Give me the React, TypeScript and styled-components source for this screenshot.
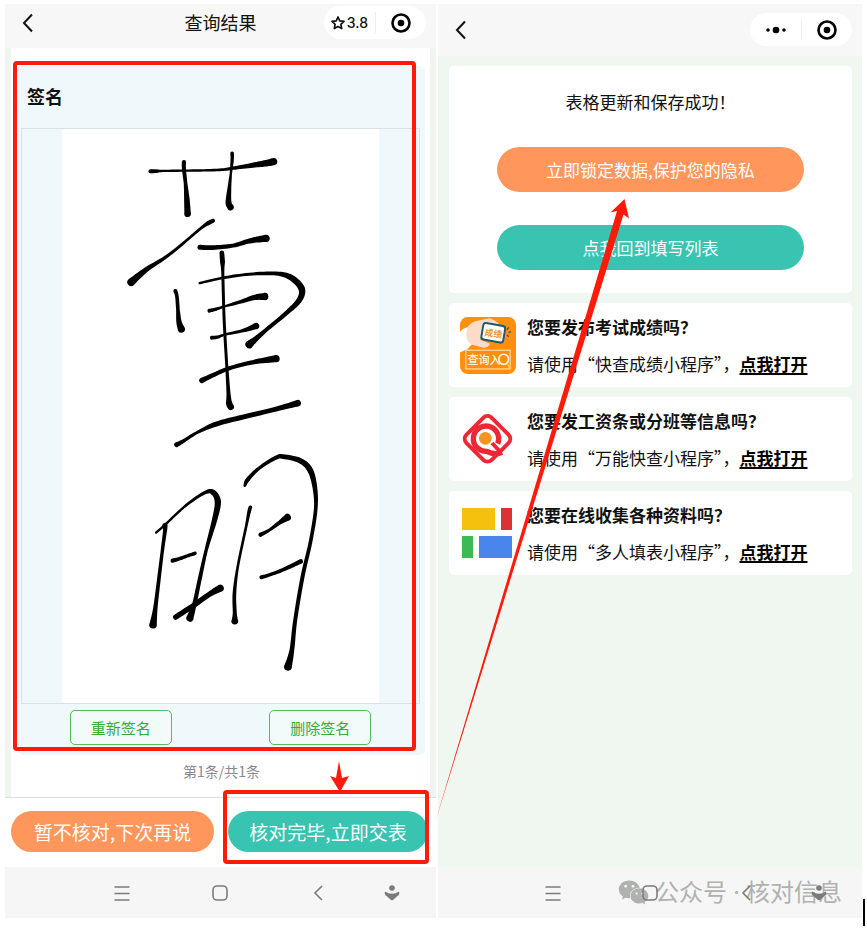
import React from "react";
import styled, { createGlobalStyle } from "styled-components";
import { FaWeixin } from "react-icons/fa";

const GlobalStyle = createGlobalStyle`
  *, *::before, *::after { box-sizing: border-box; }
  body {
    margin: 0;
    background: #fff;
    color: #111;
    font-family: "Noto Sans CJK SC", "Noto Sans", sans-serif;
  }
  button { font-family: inherit; cursor: pointer; }
  h1, h2, p { margin: 0; font-weight: 400; }
  svg { display: block; flex: none; }
`;

const RED = "#ff1a0a";
const ORANGE = "#ff965b";
const TEAL = "#39c4b2";

const Page = styled.main`
  position: relative;
  display: grid;
  grid-template-columns: 431fr 424fr;
  gap: 2px;
  min-height: 100vh;
  padding: 4px 5px 12px;
  overflow: hidden;
`;

const Phone = styled.section`
  display: flex;
  flex-direction: column;
  min-width: 0;
`;

const Header = styled.header<{ $tall?: boolean }>`
  display: grid;
  grid-template-columns: 1fr auto 1fr;
  align-items: center;
  padding: ${(p) => (p.$tall ? "9px 10px 10px" : "2px 10px 9px")};
  background: #f7f7f7;
`;

const ScreenTitle = styled.h1`
  font-size: 18px;
  line-height: 33px;
`;

const IconButton = styled.button`
  display: flex;
  align-items: center;
  justify-content: center;
  padding: 0;
  border: 0;
  background: none;
  color: inherit;
`;

const BackButton = styled(IconButton)`
  justify-self: start;
  width: 25px;
  height: 33px;
`;

const Capsule = styled.div`
  display: grid;
  grid-template-columns: auto 51px;
  align-items: center;
  justify-self: end;
  height: 33px;
  border-radius: 17px;
  background: #fff;
`;

const CapsulePart = styled(IconButton)`
  gap: 2px;
  min-width: 51px;
  height: 21px;
  padding: 0 7px;
  font: 500 14px/21px Inter, sans-serif;

  & + & { border-left: 1px solid #eee; }
`;

const ReviewBody = styled.div`
  flex: 1;
  padding: 0 6px;
  background: #f0f5f1;
`;

const Sheet = styled.div`
  height: 100%;
  padding: 18px 5px 12px 7px;
  background: #fff;
`;

const Marked = styled.div<{ $inset: string }>`
  position: relative;

  &::after {
    content: "";
    position: absolute;
    inset: ${(p) => p.$inset};
    border: 4px solid ${RED};
    border-radius: 4px;
    pointer-events: none;
  }
`;

const SignatureCard = styled.div`
  padding: 12px 5px 10px 3px;
  border-radius: 5px;
  background: #eff8fb;
`;

const FieldTitle = styled.h2`
  padding: 0 6px 13px;
  font-size: 18px;
  font-weight: 700;
  line-height: 37px;
`;

const SignatureFrame = styled.div`
  padding: 0 40px;
  border: 1px solid #d9e1e3;

  svg { width: 100%; height: auto; background: #fff; }
`;

const SignatureActions = styled.div`
  display: grid;
  grid-template-columns: 1fr 1fr;
  justify-items: center;
  padding-top: 6px;
`;

const OutlineButton = styled.button`
  width: 102px;
  padding: 5px 0;
  border: 1px solid #52bd59;
  border-radius: 5px;
  background: #f3fafa;
  color: #32ac38;
  font-size: 15px;
  line-height: 23px;
`;

const Pager = styled.p`
  padding-top: 5px;
  color: #8a8a8a;
  font-size: 14px;
  line-height: 22px;
  text-align: center;
`;

const ActionBar = styled.div`
  display: grid;
  grid-template-columns: 203fr 200fr;
  gap: 14px;
  padding: 13px 8px 15px 6px;
  border-top: 1px solid #dcdfdf;
`;

const PillButton = styled.button<{ $color: string; $size?: number }>`
  width: 100%;
  padding: 7px 0;
  border: 0;
  border-radius: 23px;
  background: ${(p) => p.$color};
  color: #fff;
  font-size: ${(p) => p.$size ?? 17}px;
  line-height: 27px;
`;

const SystemBar = styled.nav`
  position: relative;
  display: grid;
  grid-template-columns: 67fr 99fr 98fr 98fr 50fr 19fr;
  align-items: center;
  height: 51px;
  background: #f6f6f6;
  color: #7b7b7b;

  button:first-of-type { grid-column: 2; }
`;

const SystemButton = styled(IconButton)`
  z-index: 1;
  height: 40px;
`;

const Watermark = styled.div`
  position: absolute;
  right: 20px;
  top: 7px;
  display: flex;
  align-items: center;
  gap: 6px;
  color: #b0b2b0;
  font-family: "Noto Sans", "Noto Sans CJK SC", sans-serif;
  font-size: 24px;
  line-height: 36px;
  white-space: nowrap;
`;

const ResultBody = styled.div`
  display: flex;
  flex: 1;
  flex-direction: column;
  gap: 10px;
  padding: 10px 10px 0 11px;
  background: #eff7f0;
`;

const SuccessCard = styled.div`
  display: flex;
  flex-direction: column;
  align-items: center;
  padding: 20px 12% 23px;
  border-radius: 5px;
  background: #fff;

  p { font-size: 17px; line-height: 32px; }
  button { padding: 9px 0; }
  p + button { margin-top: 29px; }
  button + button { margin-top: 33px; }
`;

const PromoCard = styled.article`
  display: flex;
  align-items: center;
  gap: 11px;
  padding: 5px 11px;
  border-radius: 5px;
  background: #fff;
  font-size: 17px;
  line-height: 37px;
  white-space: nowrap;

  h2 { font-size: 17px; font-weight: 700; line-height: 37px; }
  a {
    color: #000;
    font-weight: 700;
    text-decoration-thickness: 2px;
    text-underline-offset: 2px;
    text-decoration-skip-ink: none;
  }
`;

const ArrowLayer = styled.svg`
  position: absolute;
  left: 0;
  top: 0;
  pointer-events: none;
`;

const Caret = styled.span`
  position: absolute;
  right: 2px;
  top: 899px;
  width: 2px;
  height: 27px;
  background: #000;
`;

type InkPoint = [number, number, number];

const PEN_SPREAD = 2;

/** Smooths the pen samples (x, y, pen width) and returns the outline of the stroke. */
function inkOutline(samples: InkPoint[]): string {
  const points = samples.map(([x, y, w]): InkPoint => [x, y, w + PEN_SPREAD]);
  const dense: InkPoint[] = [];
  const at = (i: number) => points[Math.max(0, Math.min(points.length - 1, i))];
  for (let i = 0; i < points.length - 1; i++) {
    const [a, b, c, d] = [at(i - 1), at(i), at(i + 1), at(i + 2)];
    for (let s = 0; s < 8; s++) {
      const t = s / 8;
      const mix = (k: number) =>
        0.5 *
        (2 * b[k] +
          (c[k] - a[k]) * t +
          (2 * a[k] - 5 * b[k] + 4 * c[k] - d[k]) * t * t +
          (3 * b[k] - a[k] - 3 * c[k] + d[k]) * t * t * t);
      dense.push([mix(0), mix(1), b[2] + (c[2] - b[2]) * t]);
    }
  }
  dense.push(points[points.length - 1]);
  const side = (sign: number) =>
    dense.map(([x, y, w], i) => {
      const p = dense[Math.max(0, i - 1)];
      const n = dense[Math.min(dense.length - 1, i + 1)];
      const len = Math.hypot(n[0] - p[0], n[1] - p[1]) || 1;
      const h = (sign * w) / 2 / len;
      return `${(x - (n[1] - p[1]) * h).toFixed(1)} ${(y + (n[0] - p[0]) * h).toFixed(1)}`;
    });
  const left = side(1);
  const right = side(-1).reverse();
  const r0 = points[0][2] / 2;
  const r1 = points[points.length - 1][2] / 2;
  return `M${left.join("L")}A${r1} ${r1} 0 0 0 ${right[0]}L${right.slice(1).join("L")}A${r0} ${r0} 0 0 0 ${left[0]}Z`;
}

const UPPER: InkPoint[][] = [
  [[122, 92, 10], [140, 92, 9], [160, 91, 5], [250, 90, 5], [330, 88, 6], [370, 83, 8], [430, 74, 13], [470, 68, 18], [494, 63, 20]],
  [[223, 65, 11], [223, 85, 10], [228, 130, 9], [232, 180, 15], [234, 220, 18]],
  [[368, 38, 9], [368, 60, 8], [364, 100, 5], [360, 140, 9], [357, 185, 16], [363, 200, 18]],
  [[311, 241, 10], [295, 249, 11], [270, 267, 6], [180, 342, 7], [110, 388, 13], [64, 426, 22]],
  [[271, 321, 13], [310, 322, 12], [370, 316, 10], [420, 302, 13], [470, 294, 20]],
  [[337, 338, 12], [339, 365, 13], [340, 400, 7], [344, 540, 7], [352, 680, 7], [357, 760, 10], [359, 790, 17], [364, 802, 18]],
  [[270, 429, 5], [340, 413, 6], [420, 402, 7], [500, 400, 10], [545, 412, 16], [577, 445, 18], [570, 480, 15], [530, 520, 11], [470, 570, 10], [440, 596, 14], [420, 613, 22]],
  [[197, 452, 10], [202, 470, 9], [205, 510, 9], [208, 545, 14], [215, 567, 20]],
  [[299, 512, 10], [320, 507, 8], [345, 499, 5], [400, 483, 10], [435, 472, 14], [466, 469, 20]],
  [[307, 593, 10], [325, 591, 8], [345, 584, 5], [400, 572, 8], [440, 558, 18]],
  [[276, 722, 14], [310, 706, 11], [360, 685, 10], [430, 667, 11], [500, 656, 20]],
  [[201, 915, 13], [220, 905, 9], [260, 880, 7], [320, 853, 13], [400, 832, 13], [500, 808, 12], [566, 790, 18]],
];

const LOWER: InkPoint[][] = [
  [[79, 278, 5], [105, 255, 5], [170, 195, 6], [225, 158, 8], [250, 156, 14], [265, 185, 17], [255, 240, 14], [230, 330, 8], [210, 420, 10], [195, 490, 11], [181, 535, 20]],
  [[106, 257, 14], [106, 272, 10], [97, 340, 8], [80, 480, 10], [75, 520, 13], [70, 555, 21]],
  [[129, 362, 11], [150, 356, 9], [175, 347, 8], [197, 340, 9]],
  [[138, 532, 14], [190, 498, 14], [240, 463, 14], [272, 445, 20]],
  [[346, 137, 6], [355, 118, 11], [390, 83, 8], [440, 52, 10], [462, 49, 12], [510, 60, 14], [540, 85, 16], [555, 130, 13], [560, 200, 9], [545, 300, 9], [520, 410, 10], [498, 540, 10], [488, 630, 12], [476, 682, 22]],
  [[363, 201, 9], [359, 215, 9], [350, 260, 6], [325, 380, 6], [315, 460, 9], [316, 520, 10], [316, 544, 19]],
  [[393, 284, 11], [420, 270, 7], [450, 248, 10], [474, 232, 20]],
  [[396, 412, 10], [420, 405, 8], [460, 390, 9], [515, 364, 12]],
];

const Signature = () => (
  <svg viewBox="0 0 954 1728" role="img" aria-label="签名">
    <g transform="translate(144 35)">
      {UPPER.map((s, i) => <path key={i} d={inkOutline(s)} />)}
    </g>
    <g transform="translate(204 937)">
      {LOWER.map((s, i) => <path key={i} d={inkOutline(s)} />)}
    </g>
  </svg>
);

const ChevronIcon = () => (
  <svg width="12" height="20" viewBox="0 0 12 20" fill="none" stroke="#111" strokeWidth="2">
    <path d="M10 1.5 2 10l8 8.500" />
  </svg>
);

const TargetIcon = () => (
  <svg width="20" height="20" viewBox="0 0 20 20">
    <circle cx="10" cy="10" r="8.500" fill="none" stroke="#000" strokeWidth="2.600" />
    <circle cx="10" cy="10" r="3.300" />
  </svg>
);

const StarIcon = () => (
  <svg width="14" height="14" viewBox="0 0 14 14" fill="none" stroke="#111" strokeWidth="1.700" strokeLinejoin="round">
    <path d="m7 1 1.800 3.900 4.200.5-3.100 2.900.8 4.300L7 10.500l-3.700 2.100.8-4.300L1 5.400l4.200-.5Z" />
  </svg>
);

const DotsIcon = () => (
  <svg width="22" height="8" viewBox="0 0 22 8">
    <circle cx="3" cy="4" r="1.800" />
    <circle cx="11" cy="4" r="3.300" />
    <circle cx="19" cy="4" r="1.800" />
  </svg>
);

const ScoreIcon = () => (
  <svg width="56" height="57" viewBox="0 0 172 170" preserveAspectRatio="none">
    <rect width="172" height="170" rx="24" fill="#ff8f0c" />
    <path d="M-2 48Q6 34 26 30L60 60 22 96 0 106Z" fill="#fff" />
    <path d="M24 28Q38 12 62 10L92 4Q108 10 122 22L74 32 62 68 92 80Q88 92 72 92L34 82Q18 70 20 50Z" fill="#fcdcc8" />
    <rect x="68" y="22" width="68" height="50" rx="8" transform="rotate(10 102 48)" fill="#fff" stroke="#1d5872" strokeWidth="6" />
    <text x="103" y="59" transform="rotate(8 104 48)" textAnchor="middle" fontSize="27" fontWeight="700" fill="#f3952d">成绩</text>
    <path d="m144 38 6-7M149 46l7-2M144 54l6 5" stroke="#315c64" strokeWidth="4" />
    <rect x="18" y="99" width="136" height="56" fill="none" stroke="#ffe9c7" strokeWidth="3" />
    <text x="23" y="140" fontSize="34" fontWeight="500" fill="#fff6e4">查询入</text>
    <circle cx="134" cy="126" r="15" fill="none" stroke="#fff6e4" strokeWidth="5" />
    <path d="m144 139 13 16" stroke="#ffc445" strokeWidth="6" />
  </svg>
);

const QueryIcon = () => (
  <svg width="56" height="56" viewBox="0 0 168 168" fill="none" stroke="#ee2737">
    <rect x="29" y="30" width="107" height="107" rx="18" transform="rotate(45 82.500 83.500)" strokeWidth="12" />
    <path d="M113 98A38 38 0 1 0 80 121Q106 134 126 124" strokeWidth="16" />
    <path d="m96 96 28 30" strokeWidth="12" />
    <circle cx="76" cy="82" r="19" fill="#f39420" stroke="none" />
  </svg>
);

const FormIcon = () => (
  <svg width="56" height="56" viewBox="0 0 56 56">
    <path fill="#f4c20d" d="M2 3h33v22H2z" />
    <path fill="#db3236" d="M41 3h11v22H41z" />
    <path fill="#3cba54" d="M2 31h11v22H2z" />
    <path fill="#4885ed" d="M19 31h33v22H19z" />
  </svg>
);

const SystemNavigation = ({ children }: { children?: React.ReactNode }) => (
  <SystemBar aria-label="系统导航">
    <SystemButton aria-label="菜单">
      <svg width="16" height="16" viewBox="0 0 16 16" stroke="currentColor" strokeWidth="1.500">
        <path d="M0.500 2h15M0.500 8.500h15M0.500 15h15" />
      </svg>
    </SystemButton>
    <SystemButton aria-label="主页">
      <svg width="16" height="16" viewBox="0 0 16 16" fill="none" stroke="currentColor" strokeWidth="1.600">
        <rect x="1" y="1" width="14" height="14" rx="4" />
      </svg>
    </SystemButton>
    <SystemButton aria-label="后退">
      <svg width="10" height="16" viewBox="0 0 10 16" fill="none" stroke="currentColor" strokeWidth="1.600">
        <path d="M9 1 2 8l7 7" />
      </svg>
    </SystemButton>
    <SystemButton aria-label="辅助功能">
      <svg width="16" height="16" viewBox="0 0 16 16" fill="currentColor">
        <circle cx="8" cy="3" r="2.800" />
        <path d="M1 6.500Q8 11 15 6.500q1 3-1.500 4.500L9 15q-1 .7-2 0l-4.500-4Q0 9.500 1 6.500Z" />
      </svg>
    </SystemButton>
    {children}
  </SystemBar>
);

const PROMOS = [
  { icon: <ScoreIcon />, question: "您要发布考试成绩吗？", program: "快查成绩小程序" },
  { icon: <QueryIcon />, question: "您要发工资条或分班等信息吗？", program: "万能快查小程序" },
  { icon: <FormIcon />, question: "您要在线收集各种资料吗？", program: "多人填表小程序" },
];

export default function App() {
  return (
    <>
      <GlobalStyle />
      <Page lang="zh-CN">
        <Phone>
          <Header>
            <BackButton aria-label="返回"><ChevronIcon /></BackButton>
            <ScreenTitle>查询结果</ScreenTitle>
            <Capsule>
              <CapsulePart><StarIcon />3.8</CapsulePart>
              <CapsulePart aria-label="关闭"><TargetIcon /></CapsulePart>
            </Capsule>
          </Header>
          <ReviewBody>
            <Sheet>
              <Marked $inset="-5px 9px 4px -5px">
                <SignatureCard>
                  <FieldTitle>签名</FieldTitle>
                  <SignatureFrame><Signature /></SignatureFrame>
                  <SignatureActions>
                    <OutlineButton>重新签名</OutlineButton>
                    <OutlineButton>删除签名</OutlineButton>
                  </SignatureActions>
                </SignatureCard>
              </Marked>
              <Pager>第1条/共1条</Pager>
            </Sheet>
          </ReviewBody>
          <ActionBar>
            <PillButton $color={ORANGE} $size={19}>暂不核对,下次再说</PillButton>
            <Marked $inset="-21px -1px -12px -5px">
              <PillButton $color={TEAL} $size={19}>核对完毕,立即交表</PillButton>
            </Marked>
          </ActionBar>
          <SystemNavigation />
        </Phone>

        <Phone>
          <Header $tall>
            <BackButton aria-label="返回"><ChevronIcon /></BackButton>
            <span />
            <Capsule>
              <CapsulePart aria-label="更多"><DotsIcon /></CapsulePart>
              <CapsulePart aria-label="关闭"><TargetIcon /></CapsulePart>
            </Capsule>
          </Header>
          <ResultBody>
            <SuccessCard>
              <p>表格更新和保存成功！</p>
              <PillButton $color={ORANGE}>立即锁定数据,保护您的隐私</PillButton>
              <PillButton $color={TEAL}>点我回到填写列表</PillButton>
            </SuccessCard>
            {PROMOS.map((promo) => (
              <PromoCard key={promo.program}>
                {promo.icon}
                <div>
                  <h2>{promo.question}</h2>
                  <p>请使用“{promo.program}”，<a href="#open">点我打开</a></p>
                </div>
              </PromoCard>
            ))}
          </ResultBody>
          <SystemNavigation>
            <Watermark>
              <FaWeixin size={31} />
              <span>公众号 · 核对信息</span>
            </Watermark>
          </SystemNavigation>
        </Phone>

        <ArrowLayer width="867" height="930" viewBox="0 0 867 930" fill={RED} aria-hidden="true">
          <path d="m339 761 3 17 7-2-9 16-10-16 6 2Z" />
          <path d="M435 823 617 211 610.500 212.500 624.500 199 629 218.500 623.500 214.500Z" />
        </ArrowLayer>
        <Caret />
      </Page>
    </>
  );
}
